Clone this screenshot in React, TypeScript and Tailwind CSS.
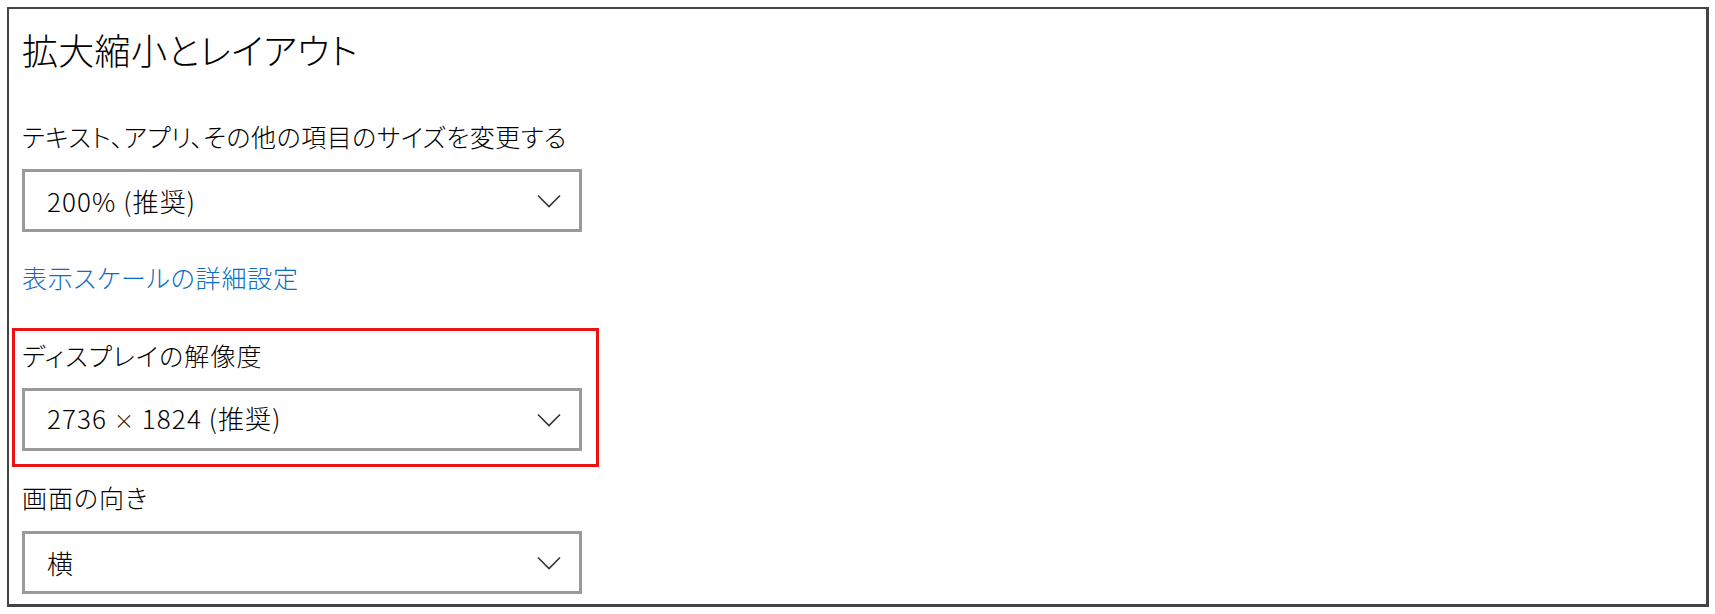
import React from "react";

const Chevron = () => (
    <svg width="24" height="14" viewBox="0 0 24 14" fill="none">
        <path d="M1 1.5 L12 12.5 L23 1.5" stroke="#333" strokeWidth="1.6" />
    </svg>
);

const Dropdown = ({children}: { children: React.ReactNode }) => (
    <div className="w-[560px] h-[63px] border-[3px] border-[#9a9a9a] flex items-center justify-between pl-[22px] pr-[18px] bg-white">
        <span className="text-[26px] leading-[32px] tracking-[1.1px] text-black">{children}</span>
        <Chevron/>
    </div>
);

export default function App() {
    return (
        <div
            className="w-[1715px] h-[614px] bg-white pt-[7px] pl-[7px] [font-feature-settings:'palt'] text-black font-light"
            style={{fontFamily: "'Noto Sans CJK JP', 'Noto Sans', sans-serif"}}
        >
            <div className="w-[1702px] h-[600px] border-l-2 border-t-2 border-r-[3px] border-b-[3px] border-[#444] pl-[13px]">
                <h1 className="mt-[18px] text-[36px] leading-[44px] tracking-[0.3px] font-light">拡大縮小とレイアウト</h1>

                <div className="mt-[49px] text-[25px] leading-[32px] tracking-[0.5px]">テキスト、アプリ、その他の項目のサイズを変更する</div>
                <div className="mt-[17px]">
                    <Dropdown>200% (推奨)</Dropdown>
                </div>

                <div className="mt-[29px] text-[25px] leading-[32px] tracking-[0.8px] text-[#0a6cc4]">表示スケールの詳細設定</div>

                <div className="mt-[35px] -ml-[10px] w-[587px] border-[3px] border-[#ee1111] pl-[7px] pt-[8px] pb-[13px]">
                    <div className="text-[25px] leading-[32px] tracking-[1.1px]">ディスプレイの解像度</div>
                    <div className="mt-[17px]">
                        <Dropdown>2736 <span className="text-[20px]">×</span> 1824 (推奨)</Dropdown>
                    </div>
                </div>

                <div className="mt-[14px] text-[25px] leading-[32px] tracking-[1px]">画面の向き</div>
                <div className="mt-[18px]">
                    <Dropdown>横</Dropdown>
                </div>
            </div>
        </div>
    );
}
